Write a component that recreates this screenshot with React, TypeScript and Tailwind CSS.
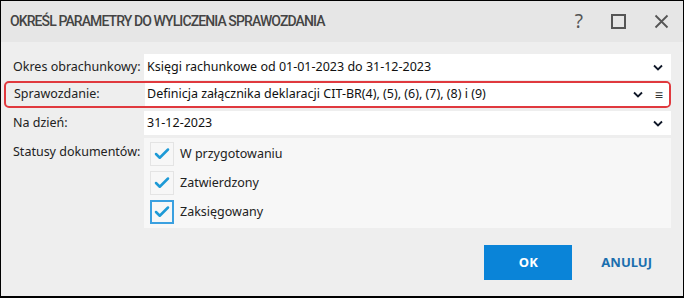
import { Check } from 'lucide-react';

const font = { fontFamily: '"Noto Sans", "Open Sans", sans-serif' };

function Chevron() {
  return (
    <svg width="10" height="7" viewBox="0 0 10 7" className="text-gray-900">
      <path d="M1 1.5 L5 5.5 L9 1.5" fill="none" stroke="currentColor" strokeWidth="1.8" />
    </svg>
  );
}

function Box({ label, focused }: { label: string; focused?: boolean }) {
  return (
    <div className="flex items-center gap-[6px]">
      <div
        className={
          'w-[24px] h-[24px] flex items-center justify-center bg-[#f7f7f7] ' +
          (focused ? 'border-2 border-[#3aa0e0]' : 'border border-[#e4e4e4]')
        }
      >
        <Check className="w-[18px] h-[18px] text-[#1d9ad6]" strokeWidth={3.4} />
      </div>
      <span className="text-[12.5px] text-[#222]">{label}</span>
    </div>
  );
}

const label = 'w-[139px] shrink-0 pl-[8px] text-[12.5px] text-[#222] whitespace-nowrap';

export default function App() {
  return (
    <div className="w-[684px] h-[298px] border border-black border-b-2 bg-[#eeeeee] flex flex-col" style={font}>
      <div className="h-[41px] bg-[#e6e6e6] flex items-center pl-[9px] pr-[14px]">
        <h1 className="flex-1 font-['Roboto',sans-serif] text-[14px] font-medium text-[#444] tracking-[-0.9px] whitespace-nowrap">
          OKREŚL PARAMETRY DO WYLICZENIA SPRAWOZDANIA
        </h1>
        <div className="flex items-center gap-[28px] text-[#555]">
          <span className="text-[19px] leading-none">?</span>
          <div className="w-[15px] h-[15px] border-2 border-[#555]" />
          <svg width="15" height="15" viewBox="0 0 15 15">
            <path d="M1.5 1.5 L13.5 13.5 M13.5 1.5 L1.5 13.5" stroke="#555" strokeWidth="1.8" />
          </svg>
        </div>
      </div>

      <div className="flex-1 flex flex-col pt-[12px] pl-[4px] pr-[12px]">
        <div className="flex items-center h-[26px]">
          <span className={label}>Okres obrachunkowy:</span>
          <div className="flex-1 h-[26px] bg-white flex items-center pl-[3px] pr-[8px]">
            <span className="flex-1 text-[12.5px] text-[#111]">Księgi rachunkowe od 01-01-2023 do 31-12-2023</span>
            <Chevron />
          </div>
        </div>

        <div className="flex items-center h-[27px] mt-[1px] border-2 border-[#e0393e] rounded-[5px] -ml-[1px]">
          <span className={label + ' w-[138px] pl-[7px]'}>Sprawozdanie:</span>
          <div className="flex-1 h-full bg-white flex items-center pl-[2px] pr-[6px] rounded-r-[3px]">
            <span className="flex-1 text-[12.5px] text-[#111]">Definicja załącznika deklaracji CIT-BR(4), (5), (6), (7), (8) i (9)</span>
            <Chevron />
            <span className="ml-[12px] text-[14px] leading-none text-[#333]">≡</span>
          </div>
        </div>

        <div className="flex items-center h-[24px] mt-[3px]">
          <span className={label}>Na dzień:</span>
          <div className="flex-1 h-[24px] bg-white flex items-center pl-[3px] pr-[8px]">
            <span className="flex-1 text-[12.5px] text-[#111]">31-12-2023</span>
            <Chevron />
          </div>
        </div>

        <div className="flex mt-[3px]">
          <span className={label + ' pt-[5px]'}>Statusy dokumentów:</span>
          <div className="flex-1 h-[90px] bg-[#f7f7f7] flex flex-col gap-[5px] pl-[6px] pt-[4px]">
            <Box label="W przygotowaniu" />
            <Box label="Zatwierdzony" />
            <Box label="Zaksięgowany" focused />
          </div>
        </div>

        <div className="flex justify-end items-center mt-[17px] pr-[19px] gap-[29px]">
          <button className="w-[88px] h-[35px] bg-[#0a84d8] text-white text-[13px] font-bold">OK</button>
          <button className="text-[13px] font-bold text-[#1b6fae]">ANULUJ</button>
        </div>
      </div>
    </div>
  );
}
